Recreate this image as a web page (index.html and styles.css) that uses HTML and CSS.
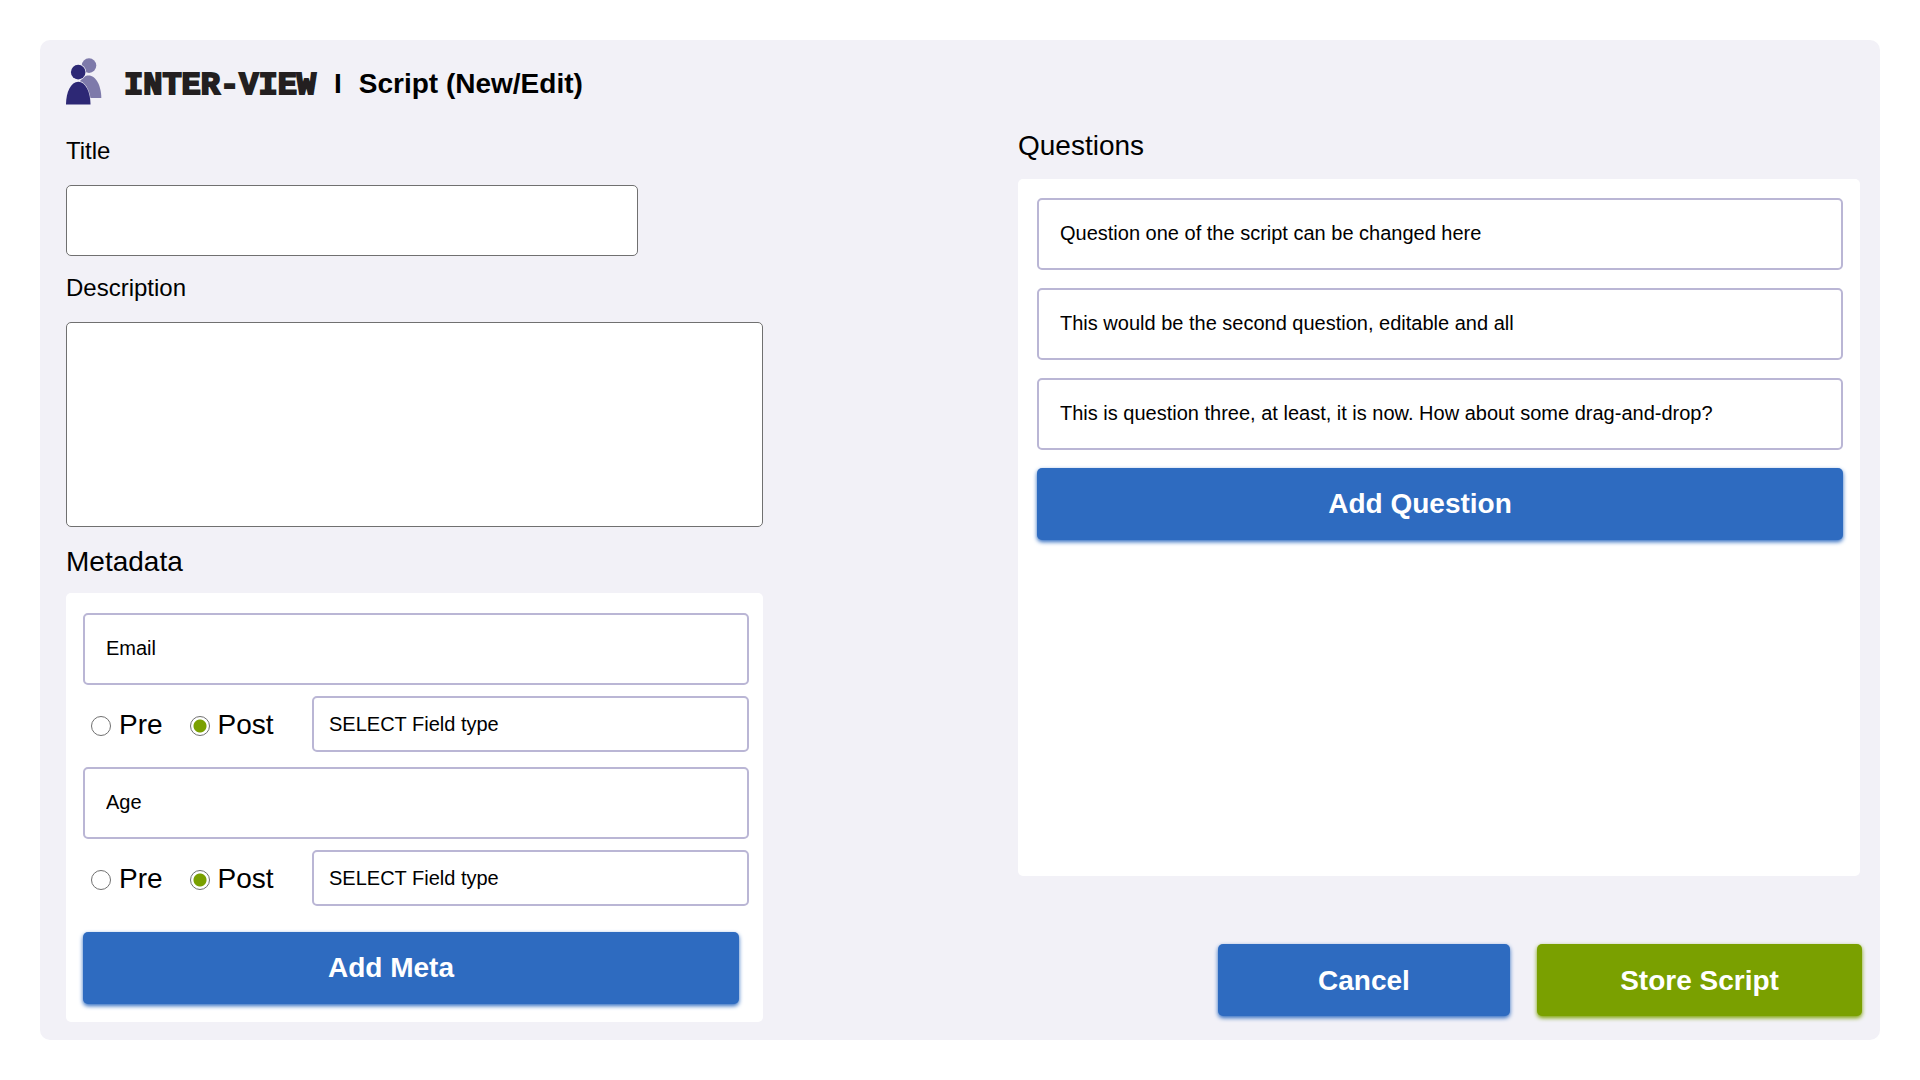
FILE: index.html
```html
<!DOCTYPE html>
<html lang="en">
<head>
<meta charset="utf-8">
<meta name="viewport" content="width=device-width, initial-scale=1">
<title>Inter-View | Script (New/Edit)</title>
<link rel="stylesheet" href="styles.css">
</head>
<body>
<form class="card">
  <header class="header">
    <svg class="logo" viewBox="0 0 36 47" aria-hidden="true">
      <g class="logo-back">
        <circle cx="23" cy="7.600" r="7.300"/>
        <path d="M10 40C10 28 15 17.500 22.500 17.500S35.300 28 35.300 40Z"/>
      </g>
      <g class="logo-front">
        <circle cx="12.200" cy="14.100" r="8" class="logo-gap"/>
        <path d="M-.5 47C-.5 34 5 23 12.300 23S25 34 25 47Z" class="logo-gap"/>
        <circle cx="12.200" cy="14.100" r="7.300"/>
        <path d="M0 46.600C0 34 5 23.700 12.300 23.700S24.500 34 24.500 46.600Z"/>
      </g>
    </svg>
    <span class="brand">INTER-VIEW</span>
    <span class="divider">I</span>
    <h1 class="page-title">Script (New/Edit)</h1>
  </header>

  <div class="columns">
    <section class="details">
      <label class="label" for="title">Title</label>
      <input class="plain-field title-field" id="title" type="text">
      <label class="label" for="description">Description</label>
      <textarea class="plain-field description-field" id="description"></textarea>

      <h2 class="heading">Metadata</h2>
      <div class="panel meta-panel">
        <div class="meta">
          <input class="field" type="text" value="Email" aria-label="Metadata name">
          <div class="meta-options">
            <div class="radios">
              <label class="radio"><input type="radio" name="moment-1">Pre</label>
              <label class="radio"><input type="radio" name="moment-1" checked>Post</label>
            </div>
            <select class="field field-type" aria-label="Field type"><option>SELECT Field type</option></select>
          </div>
        </div>
        <div class="meta">
          <input class="field" type="text" value="Age" aria-label="Metadata name">
          <div class="meta-options">
            <div class="radios">
              <label class="radio"><input type="radio" name="moment-2">Pre</label>
              <label class="radio"><input type="radio" name="moment-2" checked>Post</label>
            </div>
            <select class="field field-type" aria-label="Field type"><option>SELECT Field type</option></select>
          </div>
        </div>
        <button class="button button-add button-add-meta" type="button">Add Meta</button>
      </div>
    </section>

    <section class="questions">
      <h2 class="heading">Questions</h2>
      <div class="panel question-panel">
        <input class="field" type="text" value="Question one of the script can be changed here" aria-label="Question 1">
        <input class="field" type="text" value="This would be the second question, editable and all" aria-label="Question 2">
        <input class="field" type="text" value="This is question three, at least, it is now. How about some drag-and-drop?" aria-label="Question 3">
        <button class="button button-add" type="button">Add Question</button>
      </div>
      <div class="actions">
        <button class="button button-cancel" type="button">Cancel</button>
        <button class="button button-store" type="submit">Store Script</button>
      </div>
    </section>
  </div>
</form>
</body>
</html>
```
FILE: styles.css
```css
* {
  box-sizing: border-box;
}

body {
  margin: 0;
  padding: 40px;
  background: #fff;
  color: #000;
  font-family: "Liberation Sans", Arial, Helvetica, sans-serif;
}

input,
textarea,
select,
button {
  margin: 0;
  font: inherit;
  color: inherit;
}

h1,
h2 {
  margin: 0;
}

.card {
  padding: 18px 18px 18px 26px;
  border-radius: 10px;
  background: #f2f1f7;
}

/* Header */

.header {
  display: flex;
  align-items: center;
  height: 47px;
  margin-bottom: 15px;
}

.logo {
  width: 36px;
  height: 47px;
}

.logo-back {
  fill: #7e7aaa;
}

.logo-front {
  fill: #2d2875;
}

.logo-gap {
  fill: #f2f1f7;
}

.brand {
  margin-left: 22px;
  padding-top: 9px;
  color: #231f20;
  font: bold 32px/36px "Liberation Mono", "Courier New", monospace;
  -webkit-text-stroke: 2px #231f20;
}

.divider,
.page-title {
  padding-top: 4px;
  font-size: 28px;
  font-weight: bold;
  line-height: 32px;
}

.divider {
  margin: 0 17px 0 18px;
}

/* Columns */

.columns {
  display: grid;
  grid-template-columns: minmax(0, 697fr) minmax(0, 844fr);
  column-gap: 255px;
}

.details {
  display: flex;
  flex-direction: column;
  padding-top: 17px;
}

.questions {
  display: flex;
  flex-direction: column;
  padding-top: 10px;
}

.label {
  margin-bottom: 20px;
  font-size: 24px;
  line-height: 28px;
}

.heading {
  margin-bottom: 15px;
  font-size: 28px;
  font-weight: normal;
  line-height: 32px;
}

.questions .heading {
  margin-bottom: 17px;
}

.plain-field {
  margin-bottom: 18px;
  padding: 12px 20px;
  border: 1px solid #707070;
  border-radius: 5px;
  background: #fff;
  font-size: 20px;
}

.title-field {
  width: 82%;
  height: 71px;
}

.description-field {
  width: 100%;
  height: 205px;
  margin-bottom: 19px;
  resize: none;
}

.panel {
  display: flex;
  flex-direction: column;
  border-radius: 5px;
  background: #fff;
}

.field {
  width: 100%;
  height: 72px;
  padding: 0 21px 2px;
  border: 2px solid #bab6d5;
  border-radius: 5px;
  background: #fff;
  font-size: 20px;
}

/* Metadata */

.meta-panel {
  padding: 20px 14px 18px 17px;
}

.meta {
  margin-bottom: 15px;
}

.meta-options {
  display: flex;
  align-items: center;
  margin-top: 11px;
}

.radios {
  display: flex;
  flex: 0 0 229px;
  gap: 27px;
  padding: 2px 0 0 8px;
}

.radio {
  display: flex;
  align-items: center;
  gap: 8px;
  font-size: 28px;
  line-height: 32px;
}

.radio input {
  width: 20px;
  height: 20px;
  margin-top: 2px;
  padding: 3px;
  border: 1px solid #707070;
  border-radius: 50%;
  background: #fff;
  appearance: none;
}

.radio input:checked {
  background: radial-gradient(circle, #7aa000 6px, #fff 7px);
}

.field-type {
  flex: 1;
  min-width: 0;
  height: 56px;
  padding: 0 15px;
  appearance: none;
}

/* Questions */

.question-panel {
  flex: 1;
  gap: 18px;
  margin-right: 2px;
  padding: 19px 17px 19px 19px;
}

/* Buttons */

.button {
  height: 72px;
  padding: 0;
  border: 0;
  border-radius: 5px;
  background: #2e6bc0;
  box-shadow: 0 2px 4px #2e6bc0;
  color: #fff;
  font-size: 28px;
  font-weight: bold;
}

.button-add {
  padding-right: 40px;
}

.button-add-meta {
  margin: 11px 10px 0 0;
}

.actions {
  display: flex;
  justify-content: flex-end;
  gap: 27px;
  padding: 68px 0 6px;
}

.actions .button {
  padding-top: 2px;
}

.button-cancel {
  width: 292px;
}

.button-store {
  width: 325px;
}

.actions .button-store {
  background: #7aa000;
  box-shadow: 0 2px 4px #7aa000;
}
```
